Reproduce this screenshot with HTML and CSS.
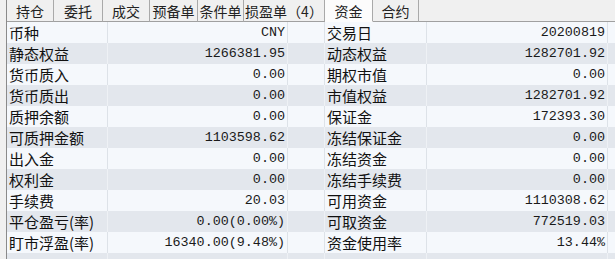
FILE: index.html
```html
<!DOCTYPE html>
<html>
<head>
    <meta charset="UTF-8">
    <title>资金</title>
    <link rel="stylesheet" href="styles.css">
</head>
<body>
    <div class="panel">
        <div class="tabs">
            <div class="tab w47">持仓</div>
            <div class="tab w49">委托</div>
            <div class="tab w47">成交</div>
            <div class="tab w48">预备单</div>
            <div class="tab w46">条件单</div>
            <div class="tab w81">损盈单（4）</div>
            <div class="tab w48 active">资金</div>
            <div class="tab w46">合约</div>
            <div class="tab-rest"></div>
        </div>
        <div class="grid">
            <div class="row"><span class="lbl">币种</span><span class="val">CNY</span><span class="gap"></span><span class="lbl">交易日</span><span class="val">20200819</span><span class="end"></span></div>
            <div class="row"><span class="lbl">静态权益</span><span class="val">1266381.95</span><span class="gap"></span><span class="lbl">动态权益</span><span class="val">1282701.92</span><span class="end"></span></div>
            <div class="row"><span class="lbl">货币质入</span><span class="val">0.00</span><span class="gap"></span><span class="lbl">期权市值</span><span class="val">0.00</span><span class="end"></span></div>
            <div class="row"><span class="lbl">货币质出</span><span class="val">0.00</span><span class="gap"></span><span class="lbl">市值权益</span><span class="val">1282701.92</span><span class="end"></span></div>
            <div class="row"><span class="lbl">质押余额</span><span class="val">0.00</span><span class="gap"></span><span class="lbl">保证金</span><span class="val">172393.30</span><span class="end"></span></div>
            <div class="row"><span class="lbl">可质押金额</span><span class="val">1103598.62</span><span class="gap"></span><span class="lbl">冻结保证金</span><span class="val">0.00</span><span class="end"></span></div>
            <div class="row"><span class="lbl">出入金</span><span class="val">0.00</span><span class="gap"></span><span class="lbl">冻结资金</span><span class="val">0.00</span><span class="end"></span></div>
            <div class="row"><span class="lbl">权利金</span><span class="val">0.00</span><span class="gap"></span><span class="lbl">冻结手续费</span><span class="val">0.00</span><span class="end"></span></div>
            <div class="row"><span class="lbl">手续费</span><span class="val">20.03</span><span class="gap"></span><span class="lbl">可用资金</span><span class="val">1110308.62</span><span class="end"></span></div>
            <div class="row"><span class="lbl">平仓盈亏(率)</span><span class="val">0.00(0.00%)</span><span class="gap"></span><span class="lbl">可取资金</span><span class="val">772519.03</span><span class="end"></span></div>
            <div class="row"><span class="lbl">盯市浮盈(率)</span><span class="val">16340.00(9.48%)</span><span class="gap"></span><span class="lbl">资金使用率</span><span class="val">13.44%</span><span class="end"></span></div>
            <div class="row filler"><span class="lbl"></span><span class="val"></span><span class="gap"></span><span class="lbl"></span><span class="val"></span><span class="end"></span></div>
        </div>
    </div>
</body>
</html>
```

FILE: styles.css
```css
body {
    margin: 0;
    background-color: #f0f0f0;
    font-family: "Noto Sans CJK SC", sans-serif;
    color: #111;
    overflow: hidden;
}
.panel {
    width: 615px;
    height: 259px;
    padding-left: 6px;
    box-sizing: border-box;
}
.tabs {
    display: flex;
    height: 22px;
    border-left: 1px solid #8a8a8a;
    box-sizing: border-box;
}
.tab {
    height: 22px;
    box-sizing: border-box;
    padding-top: 2px;
    border-right: 1px solid #a9a9a9;
    border-bottom: 1px solid #a0a0a0;
    font-size: 14px;
    line-height: 19px;
    text-align: center;
    color: #222;
    background-color: #f0f0f0;
}
.tab.active {
    background-color: #fcfcfc;
    border-bottom-color: #fcfcfc;
}
.tab-rest {
    flex: 1;
    border-bottom: 1px solid #a0a0a0;
}
.w46 { width: 46px; }
.w47 { width: 47px; }
.w48 { width: 48px; }
.w49 { width: 49px; }
.w81 { width: 81px; }
.grid {
    border-left: 1px solid #8a8a8a;
}
.row {
    display: grid;
    grid-template-columns: 101px 180px 37px 102px 181px 1fr;
    height: 21px;
    background-color: #f5f8fc;
}
.row:nth-child(even) {
    background-color: #e3e7ed;
}
.row span {
    border-right: 1px solid #dde2e8;
    line-height: 21px;
    white-space: nowrap;
}
.row:nth-child(even) span {
    border-right-color: #eef1f5;
}
.lbl {
    padding-left: 2px;
    font-size: 15px;
}
.val {
    text-align: right;
    padding-right: 2px;
    font-family: "Liberation Mono", monospace;
    font-size: 13.4px;
    color: #1a1a1a;
}
.row .end {
    border-right: none;
}
.filler {
    height: 8px;
}
```
